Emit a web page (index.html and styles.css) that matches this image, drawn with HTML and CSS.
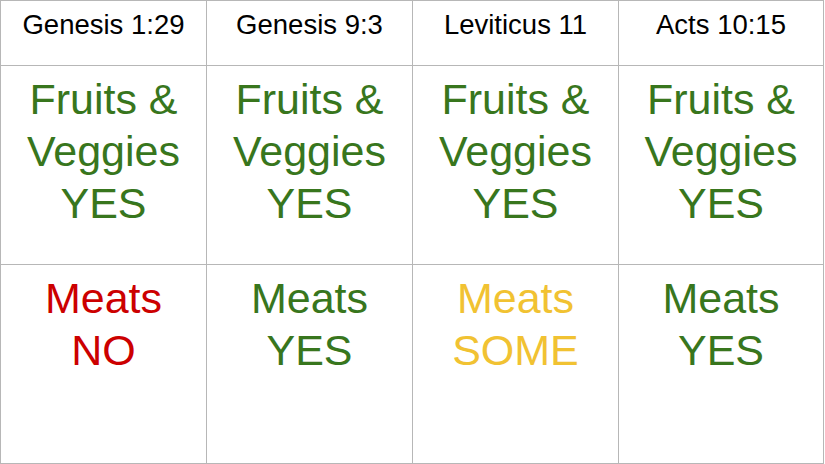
FILE: index.html
```html
<!DOCTYPE html>
<html lang="en">
<head>
    <meta charset="UTF-8">
    <meta name="viewport" content="width=device-width, initial-scale=1.0">
    <title>Food in the Bible</title>
    <link rel="stylesheet" href="styles.css">
</head>
<body>
    <div class="grid">
        <div class="cell head">Genesis 1:29</div>
        <div class="cell head">Genesis 9:3</div>
        <div class="cell head">Leviticus 11</div>
        <div class="cell head">Acts 10:15</div>

        <div class="cell big yes">Fruits &amp;<br>Veggies<br>YES</div>
        <div class="cell big yes">Fruits &amp;<br>Veggies<br>YES</div>
        <div class="cell big yes">Fruits &amp;<br>Veggies<br>YES</div>
        <div class="cell big yes">Fruits &amp;<br>Veggies<br>YES</div>

        <div class="cell big no">Meats<br>NO</div>
        <div class="cell big yes">Meats<br>YES</div>
        <div class="cell big some">Meats<br>SOME</div>
        <div class="cell big yes">Meats<br>YES</div>
    </div>
</body>
</html>
```

FILE: styles.css
```css
body {
    margin: 0;
    background: #fff;
    font-family: "Liberation Sans", Arial, sans-serif;
}
.grid {
    display: grid;
    grid-template-columns: 205px 205px 205px 204px;
    grid-template-rows: 64px 198px 198px;
    gap: 1px;
    padding: 1px;
    width: 822px;
    background: #b7b7b7;
}
.cell {
    background: #fff;
    text-align: center;
    padding-top: 7px;
    box-sizing: border-box;
}
.head {
    font-size: 27.5px;
    line-height: 32px;
    padding-top: 8px;
    color: #000;
}
.big {
    font-size: 43px;
    line-height: 52px;
}
.yes {
    color: #38761d;
}
.no {
    color: #cc0000;
}
.some {
    color: #f1c232;
}
```
